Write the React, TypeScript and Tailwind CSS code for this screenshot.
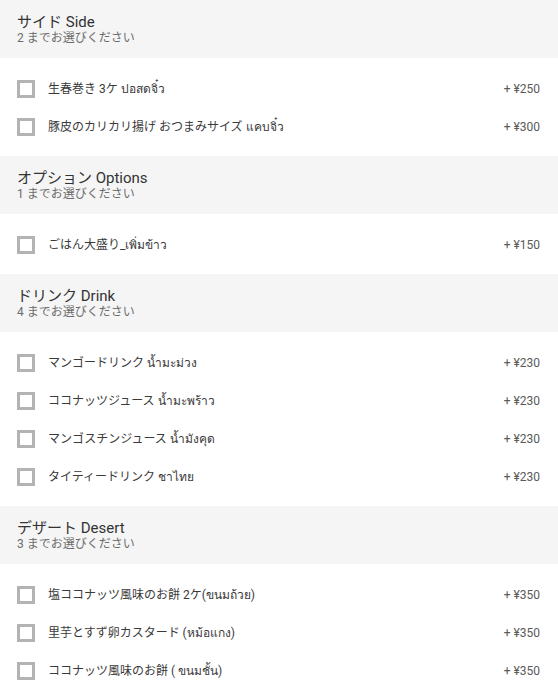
import React from "react";

type Item = { name: string; price: string };
type Section = { title: string; sub: string; items: Item[] };

const sections: Section[] = [
  {
    title: "サイド Side",
    sub: "2 までお選びください",
    items: [
      { name: "生春巻き 3ケ ปอสดจิ๋ว", price: "+ ¥250" },
      { name: "豚皮のカリカリ揚げ おつまみサイズ แคบจิ๋ว", price: "+ ¥300" },
    ],
  },
  {
    title: "オプション Options",
    sub: "1 までお選びください",
    items: [{ name: "ごはん大盛り_เพิ่มข้าว", price: "+ ¥150" }],
  },
  {
    title: "ドリンク Drink",
    sub: "4 までお選びください",
    items: [
      { name: "マンゴードリンク น้ำมะม่วง", price: "+ ¥230" },
      { name: "ココナッツジュース น้ำมะพร้าว", price: "+ ¥230" },
      { name: "マンゴスチンジュース น้ำมังคุด", price: "+ ¥230" },
      { name: "タイティードリンク ชาไทย", price: "+ ¥230" },
    ],
  },
  {
    title: "デザート Desert",
    sub: "3 までお選びください",
    items: [
      { name: "塩ココナッツ風味のお餅 2ケ(ขนมถ้วย)", price: "+ ¥350" },
      { name: "里芋とすず卵カスタード (หม้อแกง)", price: "+ ¥350" },
      { name: "ココナッツ風味のお餅 ( ขนมชั้น)", price: "+ ¥350" },
    ],
  },
];

export default function App() {
  return (
    <div className="w-[558px] bg-white">
      <div className="font-['Roboto','Noto_Sans_CJK_JP','Noto_Sans',sans-serif]">
        {sections.map((s) => (
          <div key={s.title}>
            <div className="h-[58px] bg-[#f5f5f5] pl-[17px] pt-[13px]">
              <div className="text-[15px] leading-[18px] text-[#333333]">{s.title}</div>
              <div className="text-[12px] leading-[14px] text-[#6b6b6b]">{s.sub}</div>
            </div>
            <div className="pt-[12px] pb-[10px]">
              {s.items.map((it) => (
                <div key={it.name} className="flex h-[38px] items-center pl-[17px] pr-[18px]">
                  <div className="h-[18px] w-[18px] shrink-0 border-[3px] border-[#b3b3b3] bg-white" />
                  <div className="ml-[13px] flex-1 text-[12px] text-[#3a3a3a]">{it.name}</div>
                  <div className="text-[12px] text-[#5a5a5a]">{it.price}</div>
                </div>
              ))}
            </div>
          </div>
        ))}
      </div>
    </div>
  );
}
